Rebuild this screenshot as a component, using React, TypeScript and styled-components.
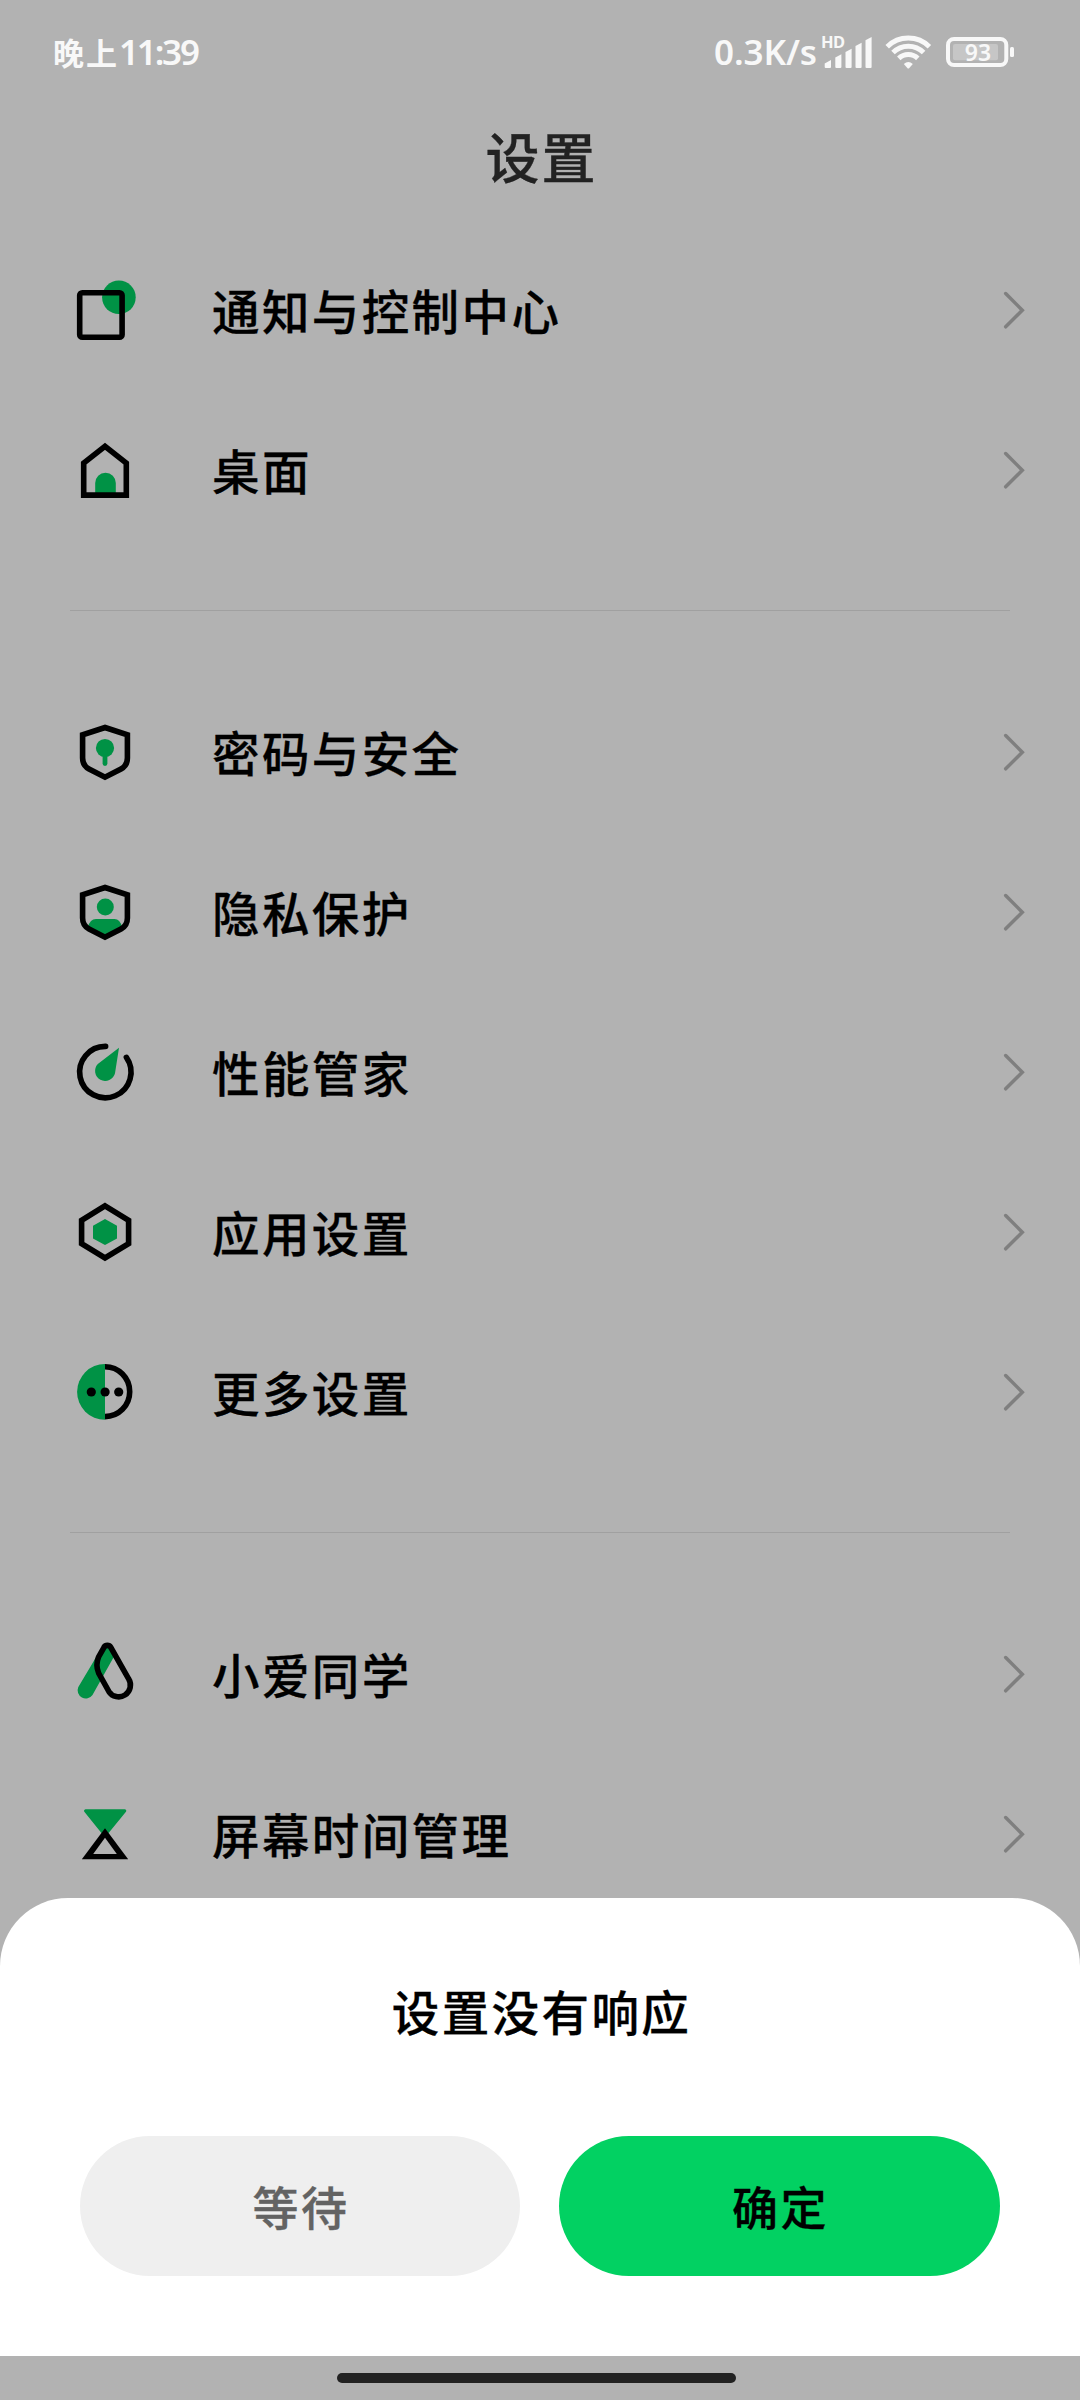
import React from 'react';
import styled, { createGlobalStyle } from 'styled-components';

const INK = '#000';
const GREEN = '#009245';
const LIGHT = '#f8f8f8';

const GlobalStyle = createGlobalStyle`
  *, *::before, *::after { box-sizing: border-box; }
  body {
    margin: 0;
    background: #b2b2b2;
    font-family: "Noto Sans CJK SC", "Noto Sans", sans-serif;
    -webkit-font-smoothing: antialiased;
  }
`;

const Screen = styled.div`
  position: relative;
  width: 1080px;
  height: 2400px;
  overflow: hidden;
  background: #b2b2b2;
`;

const StatusBar = styled.div`
  display: flex;
  align-items: center;
  justify-content: space-between;
  height: 104px;
  padding: 0 66px 0 53px;
  color: ${LIGHT};
`;

const Clock = styled.div`
  display: flex;
  align-items: center;
  line-height: 48px;
`;

const Period = styled.span`
  font-size: 31px;
  font-weight: 700;
  letter-spacing: 2px;
`;

const Digits = styled.span<{ $spacing: number }>`
  font-family: "Noto Sans", sans-serif;
  font-size: 35px;
  line-height: 48px;
  font-weight: 600;
  letter-spacing: ${(p) => p.$spacing}px;
`;

const Indicators = styled.div`
  display: flex;
  align-items: center;
`;

const Signal = styled.div`
  position: relative;
  display: flex;
  margin-left: 5px;
`;

const HdMark = styled.span`
  position: absolute;
  left: -1px;
  top: -3px;
  font-family: "Noto Sans", sans-serif;
  font-size: 16.5px;
  line-height: 17px;
  font-weight: 700;
  letter-spacing: -0.5px;
`;

const Wifi = styled.svg`
  margin-left: 12px;
`;

const Battery = styled.div`
  position: relative;
  display: flex;
  margin-left: 14px;
`;

const BatteryLevel = styled.span`
  position: absolute;
  left: 0;
  top: 0;
  width: 64px;
  text-align: center;
  font-family: "Noto Sans", sans-serif;
  font-size: 23px;
  line-height: 31px;
  font-weight: 600;
`;

const Header = styled.header`
  display: flex;
  align-items: center;
  justify-content: center;
  height: 108px;
  padding: 0 0 4px 3px;
  color: #222;
`;

const Title = styled.h1`
  margin: 0;
  font-size: 54px;
  line-height: 80px;
  font-weight: 500;
  letter-spacing: 2px;
  -webkit-text-stroke: 0.3px currentColor;
`;

const List = styled.main`
  display: flex;
  flex-direction: column;
  padding-top: 18px;
`;

const Row = styled.div`
  display: flex;
  align-items: center;
  flex: none;
  height: 160px;
  padding: 0 51px 0 65px;
`;

const Label = styled.span`
  flex: 1;
  margin: 0 0 1px 67px;
  font-size: 47.5px;
  line-height: 70px;
  font-weight: 500;
  letter-spacing: 2.4px;
  -webkit-text-stroke: 0.3px currentColor;
  color: ${INK};
`;

const Divider = styled.hr`
  flex: none;
  width: 940px;
  height: 1px;
  margin: 60px 70px 61px;
  border: 0;
  background: #a0a0a0;
`;

const Sheet = styled.section`
  position: absolute;
  left: 0;
  right: 0;
  bottom: 44px;
  display: flex;
  flex-direction: column;
  height: 458px;
  padding: 78px 80px 80px;
  border-radius: 68px 68px 0 0;
  background: #fff;
`;

const SheetTitle = styled.h2`
  margin: 0;
  padding-left: 3px;
  font-size: 47.5px;
  line-height: 70px;
  font-weight: 500;
  letter-spacing: 2.4px;
  -webkit-text-stroke: 0.3px currentColor;
  text-align: center;
  color: ${INK};
`;

const Actions = styled.div`
  display: grid;
  grid-template-columns: 440px 441px;
  gap: 39px;
  margin-top: 90px;
`;

const Button = styled.button<{ $primary?: boolean }>`
  height: 140px;
  padding: 0 0 3px 2px;
  border: 0;
  border-radius: 70px;
  font-family: inherit;
  font-size: 46px;
  line-height: 70px;
  font-weight: 500;
  letter-spacing: 2.4px;
  -webkit-text-stroke: 0.3px currentColor;
  color: ${(p) => (p.$primary ? INK : '#636363')};
  background: ${(p) => (p.$primary ? '#02d162' : '#efefef')};
`;

const HomeIndicator = styled.div`
  position: absolute;
  left: 337px;
  bottom: 17px;
  width: 399px;
  height: 10px;
  border-radius: 5px;
  background: #222;
`;

const IconBox = styled.svg`
  flex: none;
  width: 80px;
  height: 80px;
`;

const SHIELD =
  'M40 15.5 L62.4 22.8 V46 Q62.4 53.6 56 57 L40 65.2 L24 57 Q17.6 53.6 17.6 46 V22.8 Z';

const line = { fill: 'none', stroke: INK, strokeWidth: 5.6 };

const icons = {
  notification: (
    <>
      <circle cx="53.9" cy="27.3" r="16.8" fill={GREEN} />
      <rect x="14.7" y="22.7" width="42.4" height="44.6" rx="2.6" {...line} />
    </>
  ),
  home: (
    <>
      <path d="M30.2 65 V53 a10.3 10.3 0 0 1 20.6 0 V65 Z" fill={GREEN} />
      <path d="M18.7 65.1 V33 L40 16.4 L61.3 33 V65.1 Z" {...line} />
    </>
  ),
  security: (
    <>
      <circle cx="40" cy="36" r="9.1" fill={GREEN} />
      <path d="M40 40 V51.6" stroke={GREEN} strokeWidth="4.8" strokeLinecap="round" />
      <path d={SHIELD} {...line} />
    </>
  ),
  privacy: (
    <>
      <circle cx="40.3" cy="35" r="8.5" fill={GREEN} />
      <path d="M23 55 Q25 47 31 47 H49.5 Q55 47 57 55 L40 65 Z" fill={GREEN} />
      <path d={SHIELD} {...line} />
    </>
  ),
  performance: (
    <>
      <path d="M54 15.7 L50 41.2 A10.1 10.1 0 1 1 32.8 32 Z" fill={GREEN} />
      <path d="M61.4 25.4 A25.7 25.7 0 1 1 40.6 14.4" {...line} strokeLinecap="round" />
    </>
  ),
  apps: (
    <>
      <path d="M40 27 L52 33.7 V46.6 L40 53 L28 46.6 V33.7 Z" fill={GREEN} />
      <path d="M40 13.8 L63.6 28.4 V51.6 L40 66 L16.6 51.6 V28.4 Z" {...line} />
    </>
  ),
  more: (
    <>
      <path d="M40 12 A27.9 27.9 0 0 0 40 67.8 Z" fill={GREEN} />
      <path d="M40 14.8 A24.7 24.9 0 0 1 40 64.6" {...line} />
      <circle cx="26.3" cy="40" r="4.6" fill={INK} />
      <circle cx="40.1" cy="40" r="4.6" fill={INK} />
      <circle cx="53.7" cy="40" r="4.6" fill={INK} />
    </>
  ),
  assistant: (
    <>
      <path d="M13.2 53.2 L38 11.5 H43 L48.6 23.3 L27.5 61 A8.2 8.2 0 0 1 13.2 53.2 Z" fill={GREEN} />
      <path
        d="M39 13.3 A3.9 3.9 0 0 1 45.7 13.3 L63.6 44.8 A11.6 11.6 0 0 1 43.8 57.4 L33.6 39 Q30.2 31 33.6 22.9 Z"
        {...line}
      />
    </>
  ),
  hourglass: (
    <>
      <path d="M20.5 16.8 H59.8 L40 41 Z" fill={GREEN} stroke={GREEN} strokeWidth="3" strokeLinejoin="round" />
      <path d="M40 34.3 L63.2 65.3 H16.8 Z" fill={INK} />
      <path d="M40 43.8 L51.8 60 H28.2 Z" fill="#b2b2b2" />
    </>
  ),
};

type IconName = keyof typeof icons;

const groups: { icon: IconName; label: string }[][] = [
  [
    { icon: 'notification', label: '通知与控制中心' },
    { icon: 'home', label: '桌面' },
  ],
  [
    { icon: 'security', label: '密码与安全' },
    { icon: 'privacy', label: '隐私保护' },
    { icon: 'performance', label: '性能管家' },
    { icon: 'apps', label: '应用设置' },
    { icon: 'more', label: '更多设置' },
  ],
  [
    { icon: 'assistant', label: '小爱同学' },
    { icon: 'hourglass', label: '屏幕时间管理' },
  ],
];

const Chevron = () => (
  <svg width="28" height="40" viewBox="0 0 28 40">
    <path d="M4.7 3.6 L21.3 20.2 L4.7 36.8" fill="none" stroke="#7f7f7f" strokeWidth="3.5" strokeLinecap="round" />
  </svg>
);

const SettingRow = ({ icon, label }: { icon: IconName; label: string }) => (
  <Row>
    <IconBox viewBox="0 0 80 80">{icons[icon]}</IconBox>
    <Label>{label}</Label>
    <Chevron />
  </Row>
);

export default function App() {
  return (
    <Screen>
      <GlobalStyle />
      <StatusBar>
        <Clock>
          <Period>晚上</Period>
          <Digits $spacing={-2.2}>11:39</Digits>
        </Clock>
        <Indicators>
          <Digits $spacing={-0.1}>0.3K/s</Digits>
          <Signal>
            <HdMark>HD</HdMark>
            <svg width="51" height="32" viewBox="0 0 51 32" fill={LIGHT}>
              <path d="M2.7 27.5 L9 24 V31 q0 1 -1 1 H3.7 q-1 0 -1 -1 Z" />
              <path d="M13.3 21.5 L19.4 18.2 V31 q0 1 -1 1 H14.3 q-1 0 -1 -1 Z" />
              <path d="M23.5 16 L29.6 12.7 V31 q0 1 -1 1 H24.5 q-1 0 -1 -1 Z" />
              <path d="M33.5 10 L39.6 6.8 V31 q0 1 -1 1 H34.5 q-1 0 -1 -1 Z" />
              <path d="M43.5 4.2 L49.6 1 V31 q0 1 -1 1 H44.5 q-1 0 -1 -1 Z" />
            </svg>
          </Signal>
          <Wifi width="47" height="34" viewBox="0 0 47 34" fill="none" stroke={LIGHT} strokeWidth="5">
            <path d="M2.2 11.7 A30 30 0 0 1 44.4 11.7" />
            <path d="M8 17.6 A21.6 21.6 0 0 1 38.6 17.6" />
            <path d="M13.8 23.4 A13.6 13.6 0 0 1 32.8 23.4" />
            <path d="M18.8 29 Q23.3 24.8 27.8 29 L24.3 33 Q23.3 34 22.3 33 Z" fill={LIGHT} stroke="none" />
          </Wifi>
          <Battery>
            <svg width="68" height="30" viewBox="0 0 68 30">
              <rect x="2" y="2" width="58.3" height="26" rx="6" fill="none" stroke={LIGHT} strokeWidth="4" />
              <rect x="7" y="7" width="45" height="16.3" rx="2" fill="#c6c6c6" />
              <rect x="64" y="10" width="4" height="10" rx="1.5" fill={LIGHT} />
            </svg>
            <BatteryLevel>93</BatteryLevel>
          </Battery>
        </Indicators>
      </StatusBar>
      <Header>
        <Title>设置</Title>
      </Header>
      <List>
        {groups.map((group, i) => (
          <React.Fragment key={i}>
            {i > 0 && <Divider />}
            {group.map((item) => (
              <SettingRow key={item.label} {...item} />
            ))}
          </React.Fragment>
        ))}
      </List>
      <Sheet>
        <SheetTitle>设置没有响应</SheetTitle>
        <Actions>
          <Button>等待</Button>
          <Button $primary>确定</Button>
        </Actions>
      </Sheet>
      <HomeIndicator />
    </Screen>
  );
}
